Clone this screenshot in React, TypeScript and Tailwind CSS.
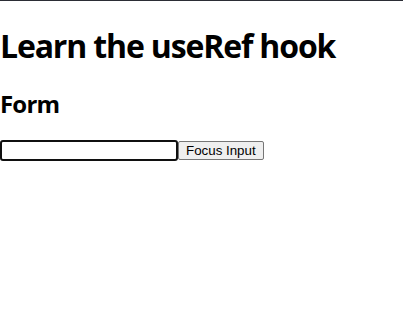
import {useRef} from 'react'

export default function App() {
  const inputRef = useRef<HTMLInputElement>(null)

  return (
    <div className="min-h-[330px] w-full border-t border-[#2b2d35] bg-white text-black">
      <h1 className="mt-[23px] text-[32px] leading-[43px] font-bold font-['Open_Sans',sans-serif] tracking-[-1.15px]">
        Learn the useRef hook
      </h1>
      <h2 className="mt-[21px] text-[24px] leading-[32px] font-bold font-['Open_Sans',sans-serif] tracking-[-0.8px]">
        Form
      </h2>
      <div className="mt-[20px] flex items-start">
        <input
          ref={inputRef}
          type="text"
          className="h-[21px] w-[178px] rounded-[3px] border-2 border-[#101010] bg-white px-[2px] text-[13px] font-['Liberation_Sans',sans-serif] outline-none"
        />
        <button
          type="button"
          onClick={() => inputRef.current?.focus()}
          className="mt-[1px] h-[19px] rounded-[2px] border border-[#767676] bg-[#efefef] px-[7px] text-[13.33px] leading-[15px] text-black font-['Liberation_Sans',sans-serif]"
        >
          Focus Input
        </button>
      </div>
    </div>
  )
}
